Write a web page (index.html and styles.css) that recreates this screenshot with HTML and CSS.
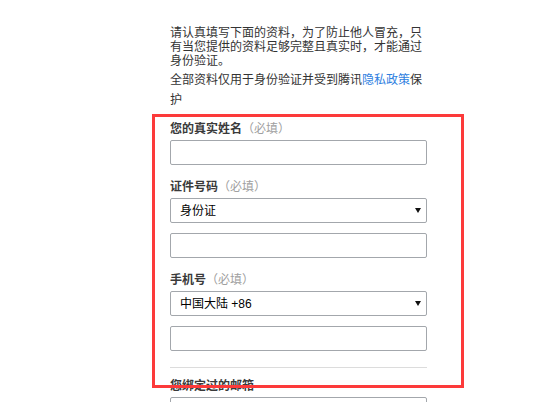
FILE: index.html
```html
<!DOCTYPE html>
<html lang="zh-CN">
<head>
    <meta charset="UTF-8">
    <meta name="viewport" content="width=device-width, initial-scale=1.0">
    <title>身份验证</title>
    <link rel="stylesheet" href="styles.css">
</head>
<body>
    <div class="page">
        <div class="intro">
            <p class="note">请认真填写下面的资料，为了防止他人冒充，只有当您提供的资料足够完整且真实时，才能通过身份验证。</p>
            <p class="privacy">全部资料仅用于身份验证并受到腾讯<a href="#">隐私政策</a>保护</p>
        </div>
        <form class="verify-form">
            <div class="field">
                <label>您的真实姓名<span class="req">（必填）</span></label>
                <input type="text" class="text-input">
            </div>
            <div class="field">
                <label>证件号码<span class="req">（必填）</span></label>
                <div class="select-wrap">
                    <select class="select-input">
                        <option>身份证</option>
                    </select>
                </div>
                <input type="text" class="text-input sub">
            </div>
            <div class="field">
                <label>手机号<span class="req">（必填）</span></label>
                <div class="select-wrap">
                    <select class="select-input">
                        <option>中国大陆 +86</option>
                    </select>
                </div>
                <input type="text" class="text-input sub">
            </div>
            <hr class="divider">
            <div class="field">
                <label>您绑定过的邮箱</label>
                <input type="text" class="text-input">
            </div>
        </form>
        <!-- highlight box drawn over the required fields -->
        <div class="highlight"></div>
    </div>
</body>
</html>
```

FILE: styles.css
```css
html, body {
    margin: 0;
    padding: 0;
    height: 100%;
    overflow: hidden;
    background: #fff;
    font-family: "Liberation Sans", "Noto Sans CJK SC", sans-serif;
    font-size: 12px;
    color: #333;
}

.page {
    position: relative;
    height: 100%;
    padding-top: 26px;
    box-sizing: border-box;
}

.intro,
.verify-form {
    width: 257px;
    margin-left: 170px;
}

.intro p {
    margin: 0;
}

.note {
    line-height: 14px;
}

.privacy {
    margin-top: 2px !important;
    line-height: 20px;
}

.privacy a {
    color: #2f7fdf;
    text-decoration: none;
}

.verify-form {
    margin-top: 9px;
}

.field {
    margin-bottom: 12px;
}

.field label {
    display: block;
    line-height: 20px;
    margin-bottom: 1px;
    font-weight: bold;
    color: #3a3a3a;
}

.req {
    font-weight: normal;
    color: #a0a0a0;
}

.text-input,
.select-input {
    display: block;
    width: 100%;
    height: 25px;
    box-sizing: border-box;
    margin: 0;
    border: 1px solid #a3a7ac;
    border-radius: 2px;
    background: #fff;
    font-family: inherit;
    font-size: 12px;
    color: #000;
    outline: none;
}

.text-input {
    padding: 0 8px;
}

.text-input.sub {
    margin-top: 10px;
}

.select-wrap {
    position: relative;
}

.select-input {
    appearance: none;
    -webkit-appearance: none;
    padding: 0 20px 0 9px;
}

.select-wrap::after {
    content: "";
    position: absolute;
    right: 6px;
    top: 10px;
    border-left: 3px solid transparent;
    border-right: 3px solid transparent;
    border-top: 5px solid #111;
    pointer-events: none;
}

.divider {
    border: none;
    border-top: 1px solid #dcdcdc;
    margin: 16px 0 8px;
}

.highlight {
    position: absolute;
    left: 152px;
    top: 114px;
    width: 312px;
    height: 274px;
    box-sizing: border-box;
    border: 3px solid #fc3a3a;
    pointer-events: none;
}
```
